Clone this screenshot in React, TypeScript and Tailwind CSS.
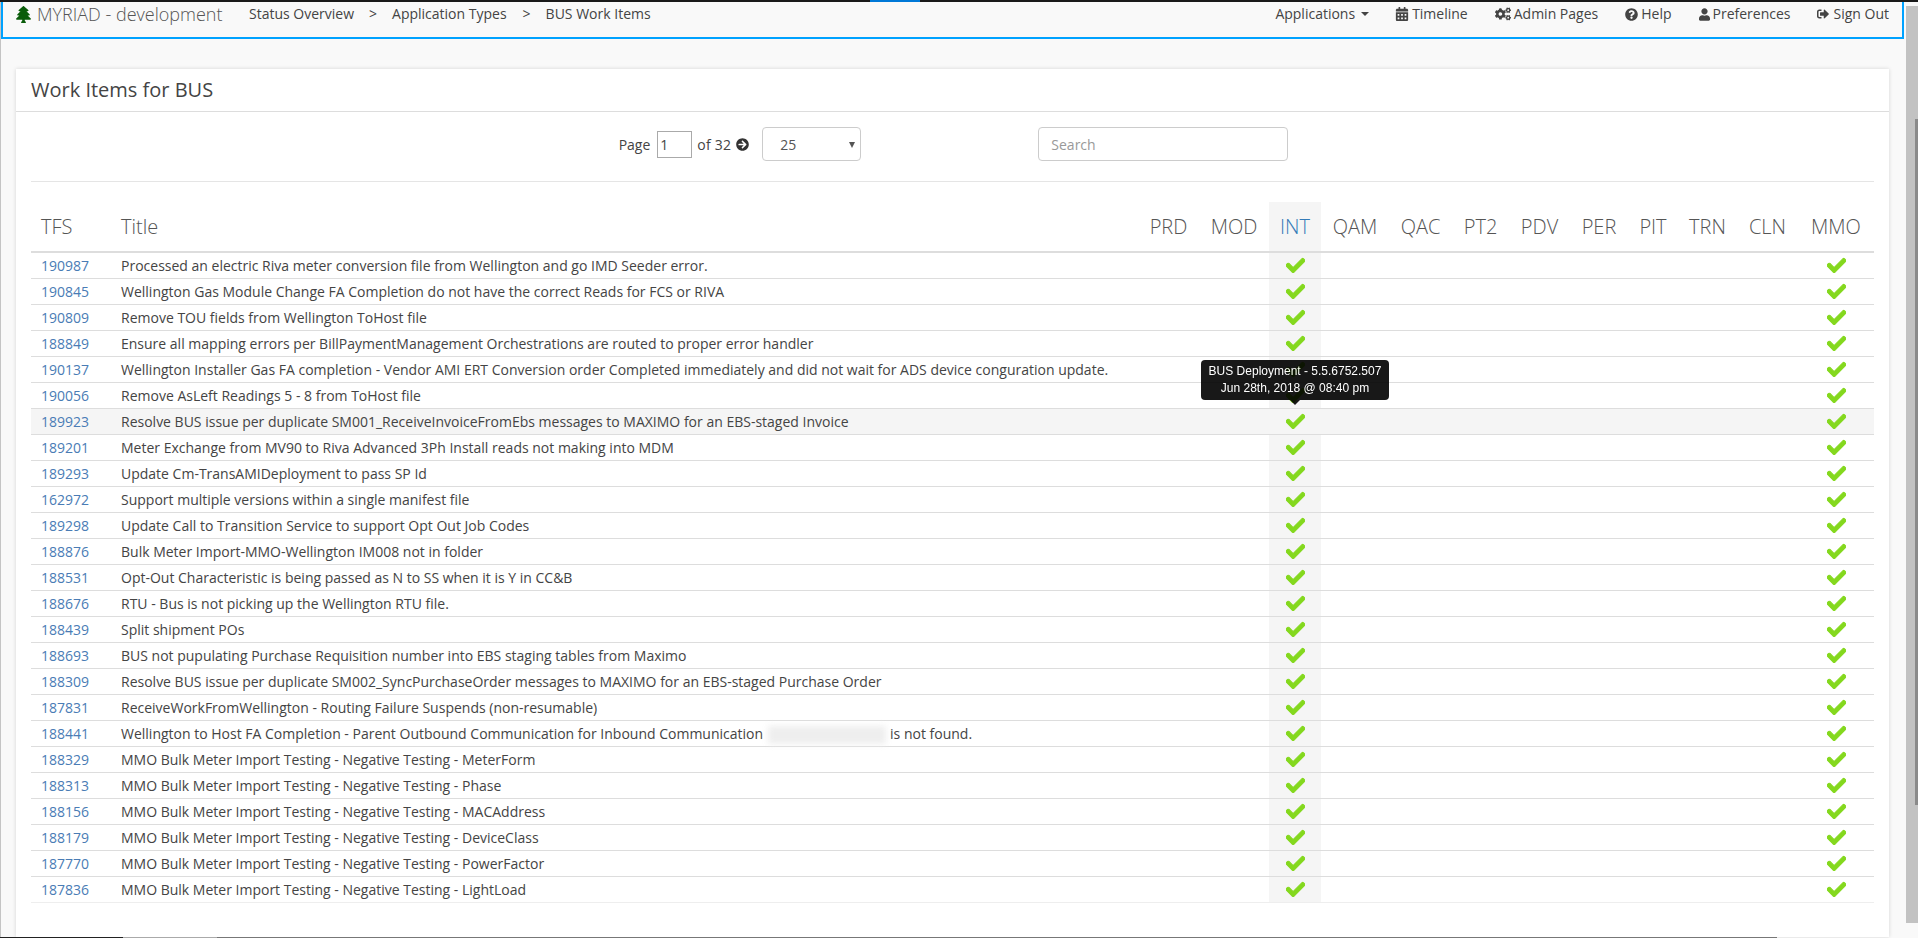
import React from "react"
import {
  FaArrowCircleRight,
  FaCalendarAlt,
  FaCheck,
  FaCogs,
  FaQuestionCircle,
  FaSignOutAlt,
  FaTree,
  FaUser,
} from "react-icons/fa"

const stages = [
  { name: "PRD", width: "w-[61px]" },
  { name: "MOD", width: "w-[70px]" },
  { name: "INT", width: "w-[52px]" },
  { name: "QAM", width: "w-[68px]" },
  { name: "QAC", width: "w-[63px]" },
  { name: "PT2", width: "w-[57px]" },
  { name: "PDV", width: "w-[61px]" },
  { name: "PER", width: "w-[58px]" },
  { name: "PIT", width: "w-[50px]" },
  { name: "TRN", width: "w-[59px]" },
  { name: "CLN", width: "w-[61px]" },
  { name: "MMO", width: "w-[76px]" },
]

const items: [string, string][] = [
  ["190987", "Processed an electric Riva meter conversion file from Wellington and go IMD Seeder error."],
  ["190845", "Wellington Gas Module Change FA Completion do not have the correct Reads for FCS or RIVA"],
  ["190809", "Remove TOU fields from Wellington ToHost file"],
  ["188849", "Ensure all mapping errors per BillPaymentManagement Orchestrations are routed to proper error handler"],
  ["190137", "Wellington Installer Gas FA completion - Vendor AMI ERT Conversion order Completed immediately and did not wait for ADS device conguration update."],
  ["190056", "Remove AsLeft Readings 5 - 8 from ToHost file"],
  ["189923", "Resolve BUS issue per duplicate SM001_ReceiveInvoiceFromEbs messages to MAXIMO for an EBS-staged Invoice"],
  ["189201", "Meter Exchange from MV90 to Riva Advanced 3Ph Install reads not making into MDM"],
  ["189293", "Update Cm-TransAMIDeployment to pass SP Id"],
  ["162972", "Support multiple versions within a single manifest file"],
  ["189298", "Update Call to Transition Service to support Opt Out Job Codes"],
  ["188876", "Bulk Meter Import-MMO-Wellington IM008 not in folder"],
  ["188531", "Opt-Out Characteristic is being passed as N to SS when it is Y in CC&B"],
  ["188676", "RTU - Bus is not picking up the Wellington RTU file."],
  ["188439", "Split shipment POs"],
  ["188693", "BUS not pupulating Purchase Requisition number into EBS staging tables from Maximo"],
  ["188309", "Resolve BUS issue per duplicate SM002_SyncPurchaseOrder messages to MAXIMO for an EBS-staged Purchase Order"],
  ["187831", "ReceiveWorkFromWellington - Routing Failure Suspends (non-resumable)"],
  ["188441", ""],
  ["188329", "MMO Bulk Meter Import Testing - Negative Testing - MeterForm"],
  ["188313", "MMO Bulk Meter Import Testing - Negative Testing - Phase"],
  ["188156", "MMO Bulk Meter Import Testing - Negative Testing - MACAddress"],
  ["188179", "MMO Bulk Meter Import Testing - Negative Testing - DeviceClass"],
  ["187770", "MMO Bulk Meter Import Testing - Negative Testing - PowerFactor"],
  ["187836", "MMO Bulk Meter Import Testing - Negative Testing - LightLoad"],
]

const Tooltip = () => (
  <div className="absolute bottom-full left-1/2 z-10 mb-[4px] flex -translate-x-1/2 flex-col items-center opacity-90">
    <div className="w-[188px] rounded-[4px] bg-black py-[3px] text-center font-['Liberation_Sans',Arial,sans-serif] text-[12px] leading-[17px] text-white">
      BUS Deployment - 5.5.6752.507
      <br />
      Jun 28th, 2018 @ 08:40 pm
    </div>
    <div className="h-0 w-0 border-x-[5px] border-t-[5px] border-x-transparent border-t-black" />
  </div>
)

const NavLink = ({ icon, label, className = "" }: { icon: React.ReactNode; label: string; className?: string }) => (
  <span className={`flex items-center gap-[3px] ${className}`}>
    {icon}
    {label}
  </span>
)

export default function App() {
  return (
    <div className="flex h-[938px] w-[1918px] flex-col overflow-hidden bg-[#f9f9f9] font-['Open_Sans',sans-serif] text-[14px] text-[#444]">
      {/* window chrome strip */}
      <div className="flex h-[2px] shrink-0 bg-[#1a1a1a]">
        <div className="ml-[870px] w-[50px] bg-[#0078d7]" />
      </div>

      <div className="flex min-h-0 flex-1">
        <div className="w-px shrink-0 bg-[#c4c4c4]" />

        <div className="flex min-w-0 flex-1 flex-col">
          <nav className="flex h-[37px] w-[1903px] shrink-0 items-start justify-between border-x-2 border-b-2 border-[#00a2ff] pt-[3px] pl-[13px] pr-[13px] leading-[18px]">
            <div className="flex items-center">
              <FaTree preserveAspectRatio="none" className="mr-[6px] h-[17px] w-[15px] text-[#0a5c0a]" />
              <span className="w-[212px] text-[18px] font-light leading-[18px] text-[#555]">MYRIAD - development</span>
              <span>Status Overview</span>
              <span className="mx-[15px]">&gt;</span>
              <span>Application Types</span>
              <span className="ml-[16px] mr-[15px]">&gt;</span>
              <span>BUS Work Items</span>
            </div>
            <div className="flex items-center gap-[27px]">
              <span className="mr-[-1px] flex items-center gap-[6px]">
                Applications
                <span className="h-0 w-0 border-x-[4px] border-t-[4px] border-x-transparent border-t-[#444]" />
              </span>
              <NavLink icon={<FaCalendarAlt className="h-[14px] w-[14px]" />} label="Timeline" />
              <NavLink icon={<FaCogs className="h-[14px] w-[16px]" />} label="Admin Pages" />
              <NavLink icon={<FaQuestionCircle className="h-[13px] w-[13px]" />} label="Help" />
              <NavLink icon={<FaUser className="h-[13px] w-[11px]" />} label="Preferences" />
              <NavLink className="ml-[-1px]" icon={<FaSignOutAlt className="h-[12px] w-[14px]" />} label="Sign Out" />
            </div>
          </nav>

          <main className="mt-[30px] ml-[15px] w-[1873px] flex-1 bg-white shadow-[0_0_4px_rgba(0,0,0,0.15)]">
            <header className="flex h-[43px] items-center border-b border-[#ddd] px-[15px] text-[20px] leading-none text-[#444]">
              Work Items for BUS
            </header>

            <div className="px-[15px]">
              <div className="flex h-[70px] items-start justify-center border-b border-[#e5e5e5] pt-[15px] pl-[2px]">
                <div className="flex h-[34px] items-center">
                  <span>Page</span>
                  <span className="ml-[7px] h-[27px] w-[35px] border border-[#aaa] pl-[2px] leading-[25px]">1</span>
                  <span className="ml-[5px] w-[36px] whitespace-nowrap tracking-[0.25px]">of 32</span>
                  <FaArrowCircleRight className="ml-[3px] h-[13px] w-[13px] text-[#333]" />
                </div>
                <div className="relative ml-[13px] flex h-[34px] w-[99px] items-center rounded-[4px] border border-[#ccc] pl-[17px] text-[#555]">
                  25
                  <span className="absolute right-[5px] top-[14px] h-0 w-0 border-x-[3.5px] border-t-[6px] border-x-transparent border-t-[#555]" />
                </div>
                <div className="ml-[177px] flex h-[34px] w-[250px] items-center rounded-[4px] border border-[#ccc] pl-[12px] text-[#999]">
                  Search
                </div>
              </div>

              <table className="mt-[20px] w-full table-fixed border-separate border-spacing-0">
                <thead>
                  <tr>
                    <th className="h-[51px] w-[80px] border-b-2 border-[#ddd] px-[10px] text-left text-[20px] font-light text-[#555]">TFS</th>
                    <th className="border-b-2 border-[#ddd] px-[10px] text-left text-[20px] font-light text-[#555]">Title</th>
                    {stages.map((stage) => (
                      <th
                        key={stage.name}
                        className={`${stage.width} whitespace-nowrap border-b-2 border-[#ddd] text-center text-[20px] font-light ${stage.name === "INT" ? "bg-[#f5f5f5] text-[#337ab7]" : "text-[#555]"}`}
                      >
                        {stage.name}
                      </th>
                    ))}
                  </tr>
                </thead>
                <tbody>
                  {items.map(([id, title], i) => {
                    const hovered = id === "189923"
                    const last = i === items.length - 1
                    const line = last ? "border-[#eee]" : "border-[#ddd]"
                    return (
                      <tr key={id} className={hovered ? "bg-[#f5f5f5]" : ""}>
                        <td className={`h-[26px] border-b ${line} px-[10px] text-[#4a7cb5]`}>{id}</td>
                        <td className={`whitespace-nowrap border-b ${line} px-[10px]`}>
                          {id === "188441" ? (
                            <>
                              Wellington to Host FA Completion - Parent Outbound Communication for Inbound Communication
                              <span className="ml-[5px] mr-[4px] inline-block h-[18px] w-[118px] bg-[#eee] align-middle blur-[3px]" />
                              is not found.
                            </>
                          ) : (
                            title
                          )}
                        </td>
                        {stages.map((stage) => {
                          const checked = stage.name === "INT" || stage.name === "MMO"
                          return (
                            <td
                              key={stage.name}
                              className={`relative border-b ${line} ${stage.name === "INT" ? "bg-[#f5f5f5]" : ""}`}
                            >
                              {checked && (
                                <FaCheck
                                  stroke="currentColor"
                                  strokeWidth={28}
                                  className="mx-auto h-[19px] w-[19px] text-[#84d81e]"
                                />
                              )}
                              {hovered && stage.name === "INT" && <Tooltip />}
                            </td>
                          )
                        })}
                      </tr>
                    )
                  })}
                </tbody>
              </table>
            </div>
          </main>
        </div>

        {/* browser scrollbar */}
        <div className="ml-[2px] mt-[4px] mb-[14px] flex w-[12px] shrink-0 justify-end bg-[#c2c2c2]">
          <div className="mt-[113px] mb-[118px] w-[3px] bg-[#8a8a8a]" />
        </div>
      </div>

      <div className="flex h-[1px] shrink-0">
        <div className="w-[123px] bg-[#222]" />
        <div className="w-[94px] bg-[#aaa]" />
        <div className="w-[1560px] bg-[#777]" />
      </div>
    </div>
  )
}
